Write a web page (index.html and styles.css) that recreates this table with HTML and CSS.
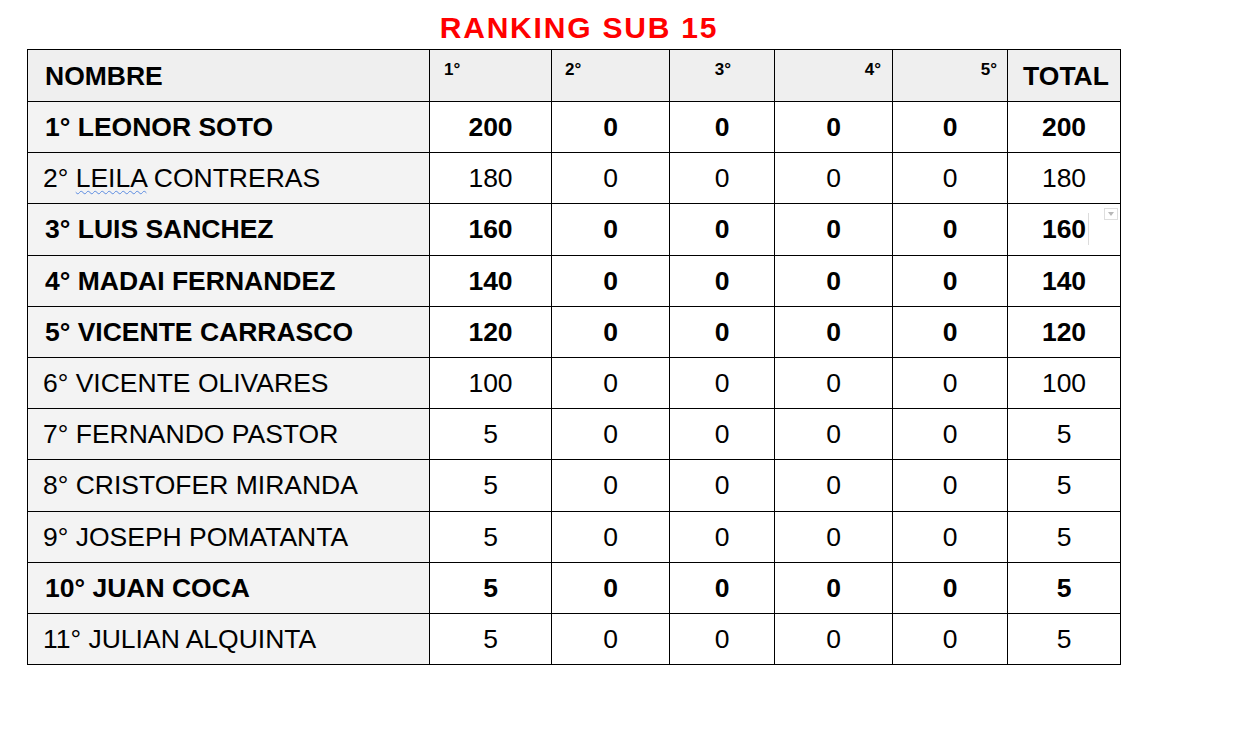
FILE: index.html
```html
<!DOCTYPE html>
<html lang="es">
<head>
<meta charset="utf-8">
<title>Ranking Sub 15</title>
<link rel="stylesheet" href="styles.css">
</head>
<body>
<div class="sheet">
  <h1 class="title">RANKING SUB 15</h1>
  <table class="ranking">
    <colgroup>
      <col class="c-name"><col class="c-1"><col class="c-2"><col class="c-3"><col class="c-4"><col class="c-5"><col class="c-total">
    </colgroup>
    <thead>
      <tr class="head">
        <th class="name">NOMBRE</th>
        <th class="small left">1°</th>
        <th class="small left2">2°</th>
        <th class="small center">3°</th>
        <th class="small right">4°</th>
        <th class="small right2">5°</th>
        <th class="total-h">TOTAL</th>
      </tr>
    </thead>
    <tbody>
      <tr class="bold"><td class="name">1° LEONOR SOTO</td><td>200</td><td>0</td><td>0</td><td>0</td><td>0</td><td>200</td></tr>
      <tr><td class="name">2° <span class="spell">LEILA</span> CONTRERAS</td><td>180</td><td>0</td><td>0</td><td>0</td><td>0</td><td>180</td></tr>
      <tr class="bold"><td class="name">3° LUIS SANCHEZ</td><td>160</td><td>0</td><td>0</td><td>0</td><td>0</td><td class="active">160<span class="caret-line"></span><span class="dropdown"></span></td></tr>
      <tr class="bold"><td class="name">4° MADAI FERNANDEZ</td><td>140</td><td>0</td><td>0</td><td>0</td><td>0</td><td>140</td></tr>
      <tr class="bold"><td class="name">5° VICENTE CARRASCO</td><td>120</td><td>0</td><td>0</td><td>0</td><td>0</td><td>120</td></tr>
      <tr><td class="name">6° VICENTE OLIVARES</td><td>100</td><td>0</td><td>0</td><td>0</td><td>0</td><td>100</td></tr>
      <tr><td class="name">7° FERNANDO PASTOR</td><td>5</td><td>0</td><td>0</td><td>0</td><td>0</td><td>5</td></tr>
      <tr><td class="name">8° CRISTOFER MIRANDA</td><td>5</td><td>0</td><td>0</td><td>0</td><td>0</td><td>5</td></tr>
      <tr><td class="name">9° JOSEPH POMATANTA</td><td>5</td><td>0</td><td>0</td><td>0</td><td>0</td><td>5</td></tr>
      <tr class="bold"><td class="name">10° JUAN COCA</td><td>5</td><td>0</td><td>0</td><td>0</td><td>0</td><td>5</td></tr>
      <tr><td class="name">11° JULIAN ALQUINTA</td><td>5</td><td>0</td><td>0</td><td>0</td><td>0</td><td>5</td></tr>
    </tbody>
  </table>
</div>
</body>
</html>
```
FILE: styles.css
```css
html, body {
  margin: 0;
  padding: 0;
  background: #ffffff;
}

body {
  font-family: "Liberation Sans", Arial, sans-serif;
  color: #000;
}

.sheet {
  width: 1094px;
  margin-left: 27px;
  padding-top: 11px;
}

.title {
  margin: 0 0 4px 0;
  padding-left: 10px;
  text-align: center;
  color: #ff0000;
  font-size: 30px;
  line-height: 34px;
  font-weight: bold;
  letter-spacing: 1.8px;
}

.ranking {
  border-collapse: collapse;
  table-layout: fixed;
  width: 1094px;
}

.c-name { width: 402px; }
.c-1 { width: 122px; }
.c-2 { width: 118px; }
.c-3 { width: 105px; }
.c-4 { width: 118px; }
.c-5 { width: 115px; }
.c-total { width: 113px; }

.ranking th,
.ranking td {
  border: 1px solid #000;
  padding: 0;
  font-size: 26.5px;
  line-height: 30px;
  text-align: center;
  vertical-align: middle;
  white-space: nowrap;
  overflow: hidden;
}

.ranking td {
  font-weight: normal;
  background: #fff;
}

.ranking tr.head {
  height: 52px;
}

.head th {
  background: #efefef;
  font-weight: bold;
}

.ranking tbody tr {
  height: 51.2px;
}

.ranking .name {
  text-align: left;
  padding-left: 16px;
  background: #f3f3f3;
}

.head th.name {
  background: #efefef;
  padding-left: 17px;
}

.ranking th.small {
  font-size: 17px;
  line-height: 20px;
  vertical-align: top;
  padding-top: 10px;
}

.ranking th.left { text-align: left; padding-left: 14px; }
.ranking th.left2 { text-align: left; padding-left: 13px; }
.ranking th.center { text-align: center; padding-left: 2px; }
.ranking th.right { text-align: right; padding-right: 11px; }
.ranking th.right2 { text-align: right; padding-right: 10px; }

.ranking th.total-h {
  padding-left: 4px;
}

.ranking tr.bold td {
  font-weight: bold;
}

.ranking tbody td.name {
  padding-left: 15px;
}

.ranking tr.bold td.name {
  padding-left: 17px;
}

.spell {
  text-decoration: underline wavy #5a8be0;
  text-decoration-thickness: 1px;
  text-underline-offset: 3px;
}

.active {
  position: relative;
}

.caret-line {
  position: absolute;
  left: 80px;
  top: 9px;
  width: 1px;
  height: 32px;
  background: #dcdcdc;
}

.dropdown {
  position: absolute;
  right: 2px;
  top: 4px;
  width: 14px;
  height: 12px;
  box-sizing: border-box;
  border: 1px solid #dedede;
  background: #fff;
}

.dropdown::after {
  content: "";
  position: absolute;
  left: 3px;
  top: 3px;
  border-left: 3.5px solid transparent;
  border-right: 3.5px solid transparent;
  border-top: 4px solid #b8b8b8;
}
```
